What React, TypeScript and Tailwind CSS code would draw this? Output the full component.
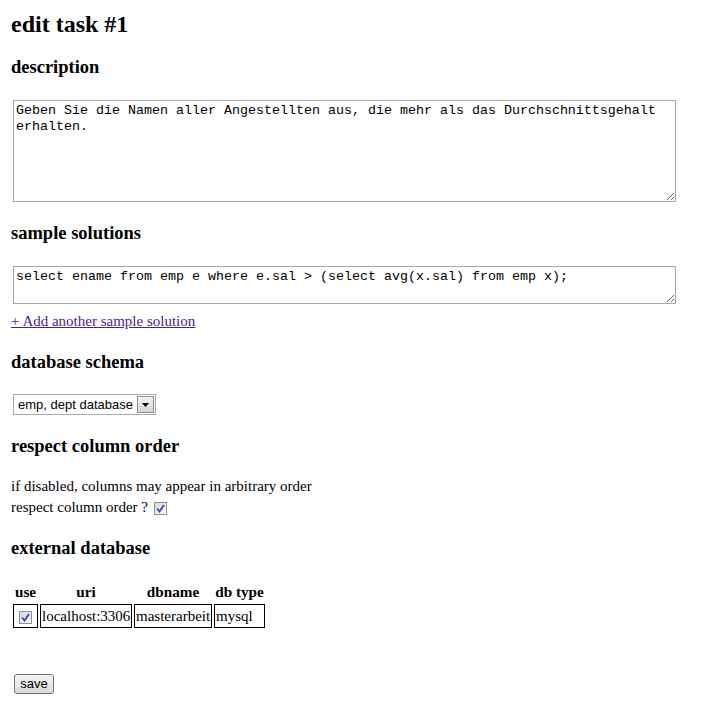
const serif = "font-['Liberation_Serif','Times_New_Roman',serif]";

function Check() {
  return (
    <span className="inline-flex h-[13px] w-[13px] items-center justify-center border border-[#8f8f8f] bg-gradient-to-br from-[#d6d6d6] to-[#fbfbfb]">
      <svg width="9" height="9" viewBox="0 0 9 9">
        <path d="M1 4.5 L3.5 7.5 L8 1" fill="none" stroke="#3048b8" strokeWidth="1.8" />
      </svg>
    </span>
  );
}

function Heading({ children, className }: { children: React.ReactNode; className: string }) {
  return <h3 className={`text-[18.5px] font-bold leading-[22px] ${className}`}>{children}</h3>;
}

export default function App() {
  return (
    <div className={`${serif} min-h-[709px] bg-white pl-[11px] pt-[10px] text-black`}>
      <h1 className="text-[24px] font-bold leading-[28px]">edit task #1</h1>

      <Heading className="mt-[18px]">description</Heading>
      <textarea
        readOnly
        defaultValue="Geben Sie die Namen aller Angestellten aus, die mehr als das Durchschnittsgehalt erhalten."
        className="ml-[2px] mt-[22px] block h-[102px] w-[663px] border border-[#a8a8a8] p-[2px] font-['Liberation_Mono','Courier_New',monospace] text-[13.33px] leading-[16px] outline-none"
      />

      <Heading className="mt-[20px]">sample solutions</Heading>
      <textarea
        readOnly
        defaultValue="select ename from emp e where e.sal > (select avg(x.sal) from emp x);"
        className="ml-[2px] mt-[22px] block h-[38px] w-[663px] border border-[#a8a8a8] p-[2px] font-['Liberation_Mono','Courier_New',monospace] text-[13.33px] leading-[16px] outline-none"
      />
      <div className="mt-[8px] leading-[18px]">
        <a href="#" className="text-[15px] text-[#551a8b] underline">
          + Add another sample solution
        </a>
      </div>

      <Heading className="mt-[21px]">database schema</Heading>
      <div className="ml-[2px] mt-[21px] flex h-[21px] w-[143px] items-center border border-[#a5acb2] bg-white pl-[4px] pr-[1px] font-['Liberation_Sans',Arial,sans-serif] text-[13px] text-black">
        <span className="flex-1 whitespace-nowrap">emp, dept database</span>
        <span className="flex h-[17px] w-[17px] items-center justify-center border border-[#8f8f8f] bg-gradient-to-b from-[#f4f4f4] to-[#d4d4d4]">
          <svg width="7" height="4" viewBox="0 0 7 4">
            <path d="M0 0 H7 L3.5 4 Z" fill="#000" />
          </svg>
        </span>
      </div>

      <Heading className="mt-[20px]">respect column order</Heading>
      <p className="mt-[20px] text-[15px] leading-[18px]">if disabled, columns may appear in arbitrary order</p>
      <div className="mt-[3px] flex h-[18px] items-center text-[15px] leading-[18px]">
        <span>respect column order ?</span>
        <span className="ml-[6px] mt-[2px] flex">
          <Check />
        </span>
      </div>

      <Heading className="mt-[21px]">external database</Heading>
      <table className="mt-[21px] border-separate border-spacing-[2px]">
        <thead>
          <tr className="text-[15.2px] font-bold leading-[18px]">
            <th className="w-[25px] p-[1px] text-center">use</th>
            <th className="w-[92px] p-[1px] text-center">uri</th>
            <th className="w-[78px] p-[1px] text-center">dbname</th>
            <th className="w-[51px] p-[1px] text-center">db type</th>
          </tr>
        </thead>
        <tbody>
          <tr className="text-[15px] leading-[18px]">
            <td className="h-[24px] border border-black p-0 text-center align-middle">
              <span className="inline-flex align-middle">
                <Check />
              </span>
            </td>
            <td className="h-[24px] whitespace-nowrap border border-black py-0 pl-[1px] pr-0 align-middle">localhost:3306</td>
            <td className="h-[24px] whitespace-nowrap border border-black py-0 pl-[1px] pr-0 align-middle">masterarbeit</td>
            <td className="h-[24px] whitespace-nowrap border border-black py-0 pl-[1px] pr-0 align-middle">mysql</td>
          </tr>
        </tbody>
      </table>

      <button className="ml-[3px] mt-[44px] block h-[20px] w-[40px] rounded-[3px] border border-[#707070] bg-gradient-to-b from-[#f6f6f6] to-[#dadada] font-['Liberation_Sans',Arial,sans-serif] text-[13px] leading-[16px] text-black">
        save
      </button>
    </div>
  );
}
